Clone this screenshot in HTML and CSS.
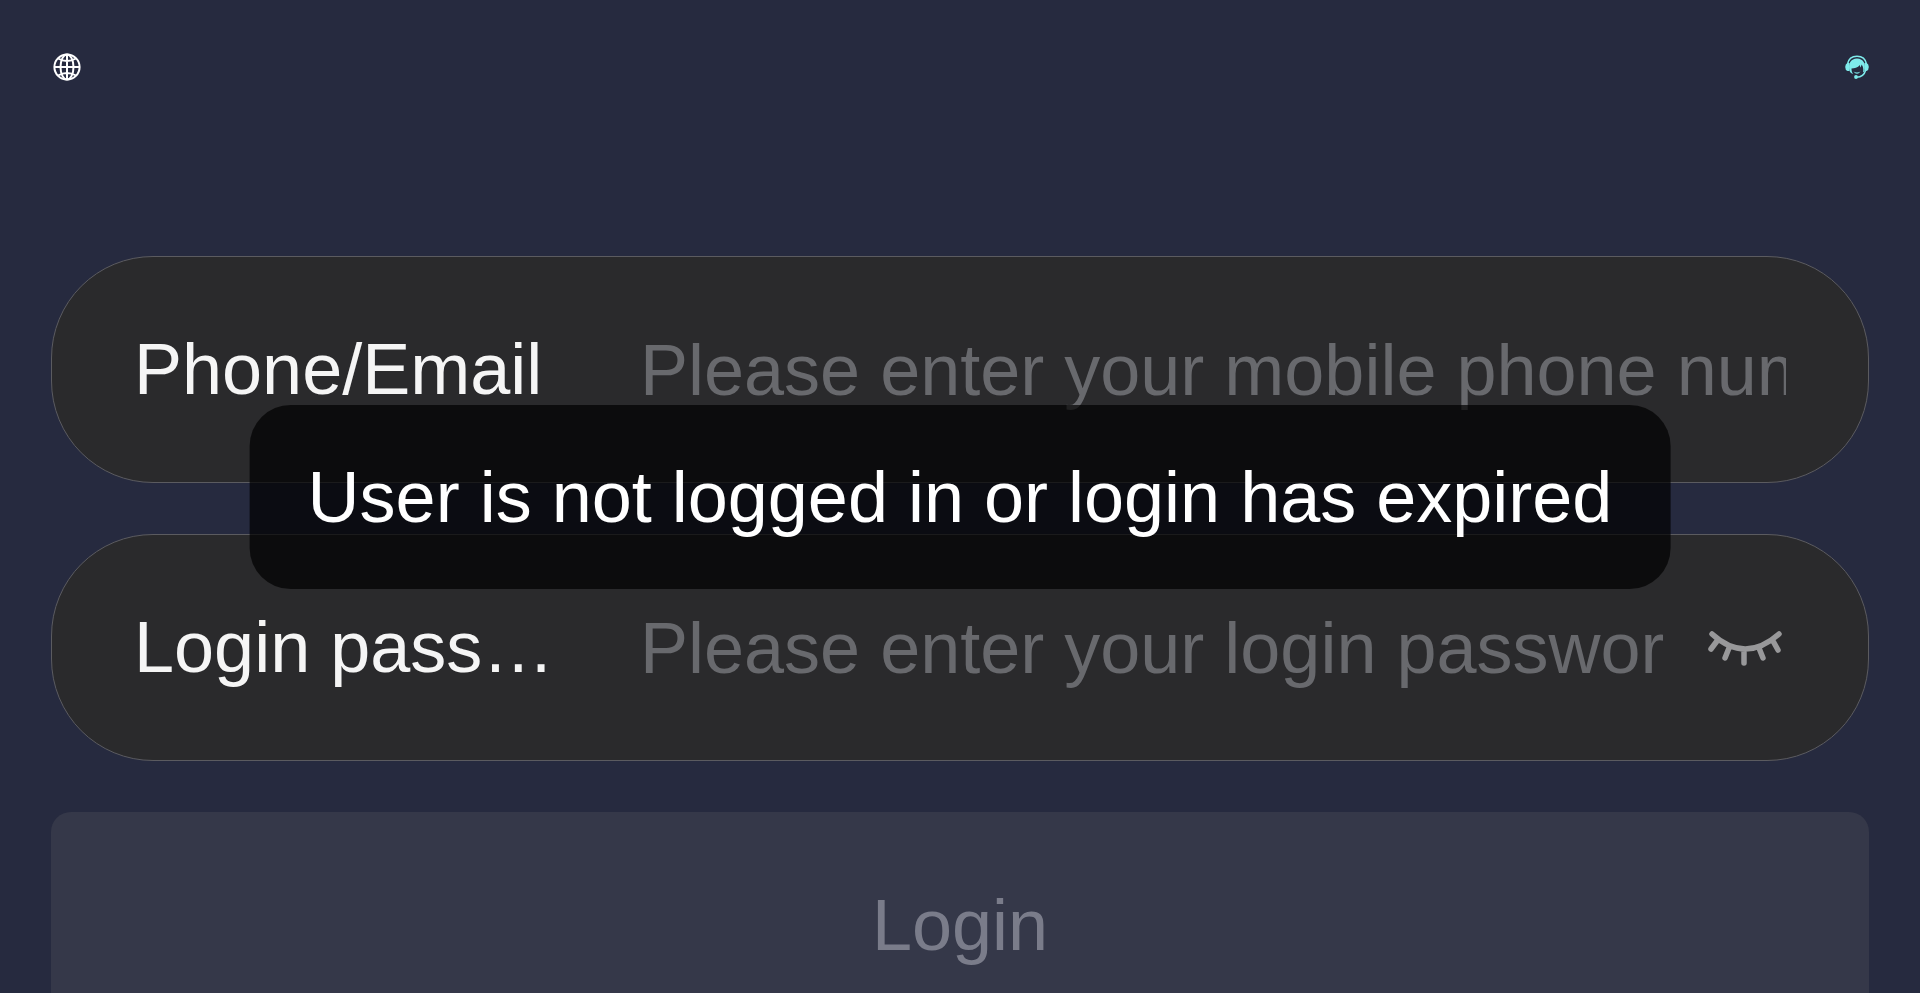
FILE: index.html
```html
<!DOCTYPE html>
<html lang="en">
  <head>
    <meta charset="UTF-8" />
    <title>Login</title>
    <meta name="viewport" content="width=device-width, initial-scale=1.0" />
    <link rel="stylesheet" href="styles.css">
  </head>
  <body>
    <header class="top-bar">
      <button type="button" class="icon-btn" aria-label="Language">
        <svg class="icon-globe" viewBox="0 0 32 32">
          <circle cx="16" cy="16" r="12.6" />
          <ellipse cx="16" cy="16" rx="6.500" ry="12.6" />
          <path d="M16 3.500v25M3.500 16h25M7 7.500q9 5 18 0M7 24.500q9 -5 18 0" />
        </svg>
      </button>
      <button type="button" class="icon-btn" aria-label="Customer service">
        <svg class="icon-service" viewBox="0 0 24 24">
          <path class="line" d="M2.500 9C3.500 3.800 7.500 1.200 12 1.200s8.500 2.600 9.500 7.800" />
          <path class="line" d="M20.500 15.500C19.500 19.500 16 22 11.500 22.300" />
          <path d="M4.500 8H2.500Q0.200 9 0.200 12t2.300 4H4.500zM19.500 8h2Q23.800 9 23.800 12t-2.300 4H19.500z" />
          <path d="M4.800 16.500C2.500 8.500 6 3.500 12 3.500s9.500 5 7.200 13l-1.200 1C18.800 14 18 11.500 16.600 9.500c-.3 1.500-.8 2.300-1.600 3V10C12.500 12.700 9.500 13.400 6.500 13.400c0 1.800.2 3.400 1.500 5.600C6.200 18.200 5.200 17.500 4.800 16.500z" />
          <path d="M8.500 16.500q3.500 2 7 0q-3.500 4.500-7 0z" />
          <circle cx="11" cy="22" r="1.900" />
        </svg>
      </button>
    </header>

    <form class="login-form">
      <div class="field">
        <label for="account">Phone/Email</label>
        <input
          type="text"
          id="account"
          placeholder="Please enter your mobile phone number/email" />
      </div>
      <div class="field">
        <label for="password">Login password</label>
        <input
          type="password"
          id="password"
          placeholder="Please enter your login password" />
        <button type="button" class="icon-btn" aria-label="Show password">
          <svg class="icon-eye" viewBox="0 0 82 82">
            <path d="M8 27Q41 57 75 27M13 34l-6 8M25 41l-4 10M40 44v12M55 41l4 10M69 34l5 9" />
          </svg>
        </button>
      </div>
      <button type="submit" class="login-btn" disabled>Login</button>
    </form>

    <div class="toast" role="alert">User is not logged in or login has expired</div>
  </body>
</html>
```
FILE: styles.css
```css
body {
  margin: 0;
  background: #262a3f;
  color: #f5f5f5;
  font-family: "Liberation Sans", Arial, sans-serif;
  font-size: 72px;
}

button,
input {
  font-family: inherit;
  font-size: inherit;
}

.icon-btn {
  display: flex;
  flex-shrink: 0;
  padding: 0;
  border: none;
  background: none;
  cursor: pointer;
}

/* Header */
.top-bar {
  display: flex;
  align-items: center;
  justify-content: space-between;
  padding: 51px 51px 0;
}

.icon-globe {
  width: 32px;
  height: 32px;
  fill: none;
  stroke: #fff;
  stroke-width: 2;
}

.icon-service {
  width: 24px;
  height: 24px;
  fill: #7eebeb;
}

.icon-service .line {
  fill: none;
  stroke: #7eebeb;
  stroke-width: 1.5;
}

/* Form */
.login-form {
  display: flex;
  flex-direction: column;
  gap: 51px;
  padding: 173px 51px 51px;
}

.field {
  display: flex;
  align-items: center;
  padding: 51px 82px;
  border: 1px solid #5b5b60;
  border-radius: 102px;
  background: #2a2a2c;
  line-height: 123px;
}

.field label {
  flex-shrink: 0;
  width: 444px;
  margin-right: 62px;
  overflow: hidden;
  text-overflow: ellipsis;
  white-space: nowrap;
}

.field input {
  flex: 1;
  min-width: 0;
  height: 123px;
  padding: 0;
  border: none;
  outline: none;
  background: none;
  color: #f5f5f5;
}

.field input::placeholder {
  color: #68696d;
  opacity: 1;
}

.field .icon-btn {
  margin-left: 41px;
}

.icon-eye {
  width: 82px;
  height: 82px;
  fill: none;
  stroke: #98989a;
  stroke-width: 5.5;
  stroke-linecap: round;
}

.login-btn {
  height: 225px;
  padding: 0;
  border: none;
  border-radius: 20px;
  background: #353849;
  color: #7a7c8a;
}

/* Message over the page */
.toast {
  position: fixed;
  top: 50%;
  left: 50%;
  transform: translate(-50%, -50%);
  padding: 41px 58px;
  border-radius: 41px;
  background: rgba(0, 0, 0, 0.7);
  color: #fff;
  line-height: 102px;
  white-space: nowrap;
}
```
